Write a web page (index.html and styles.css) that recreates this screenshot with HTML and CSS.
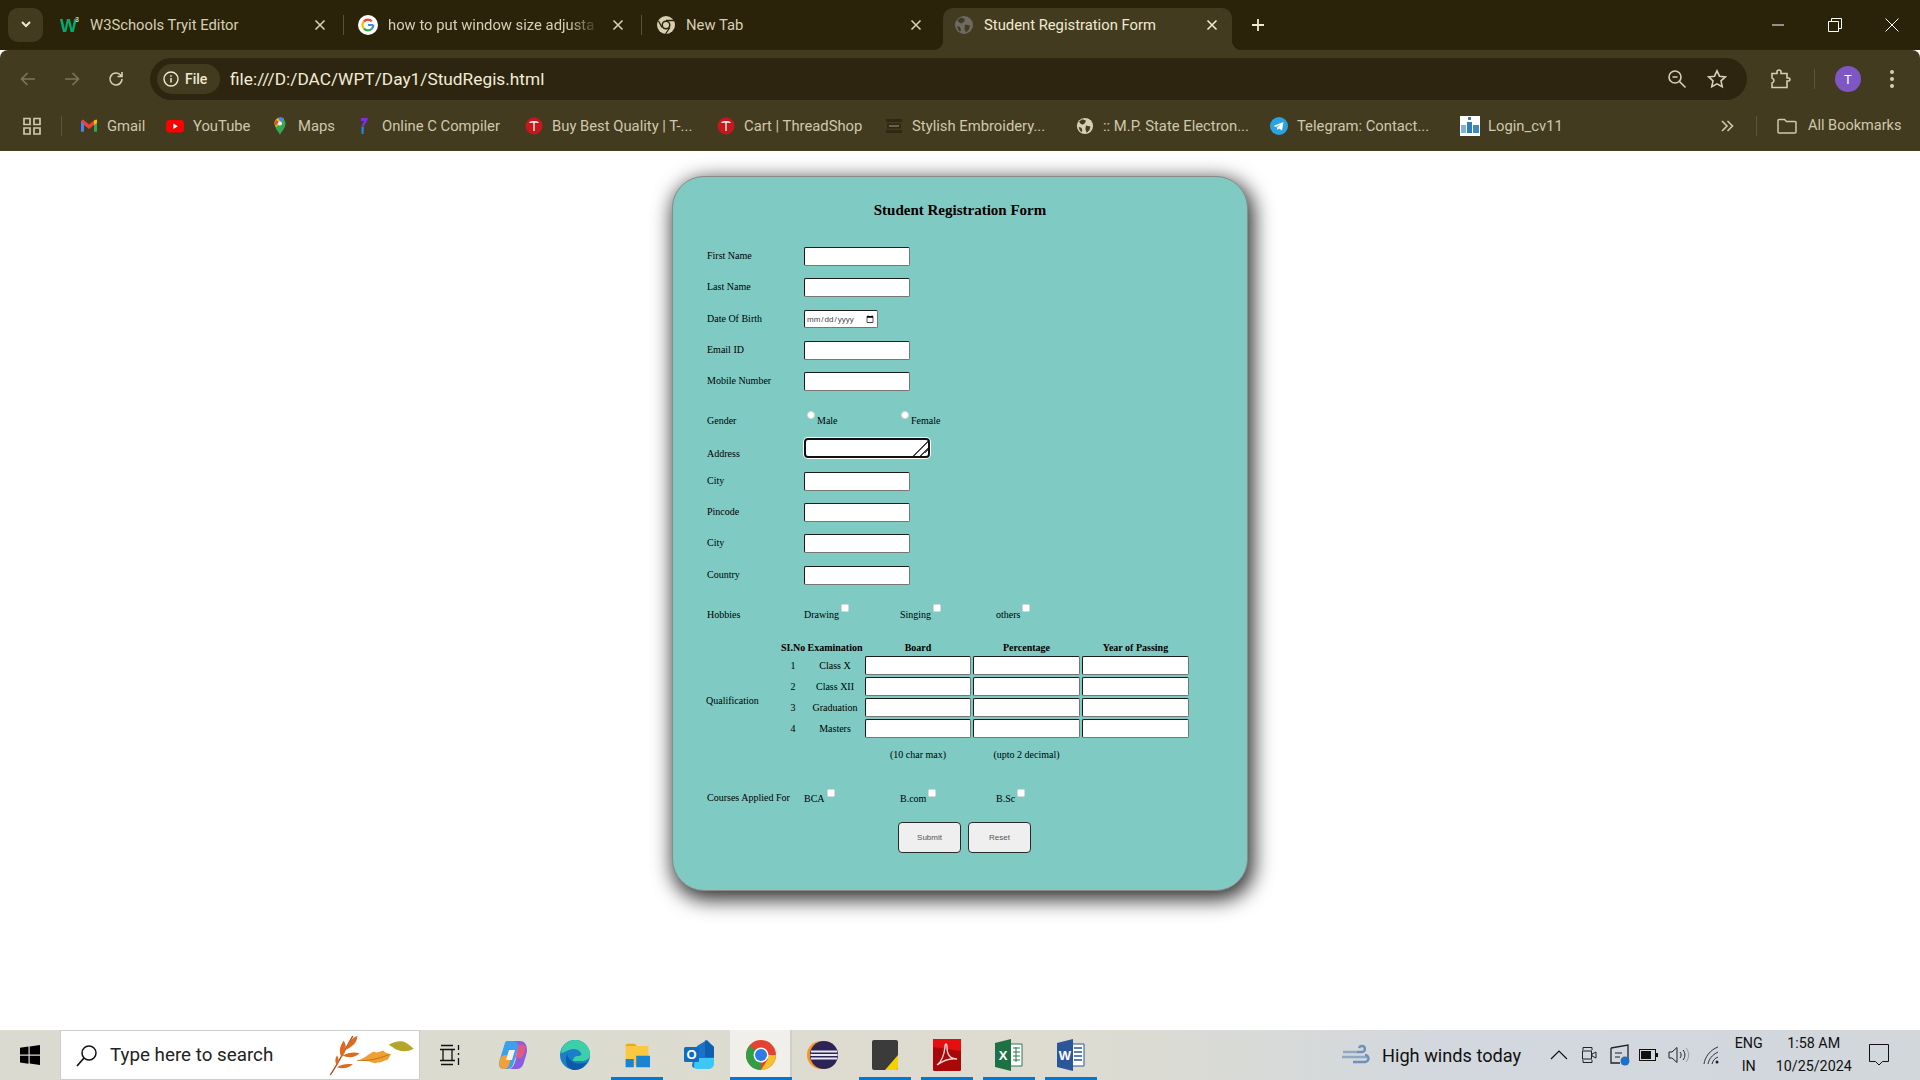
FILE: index.html
```html
<!DOCTYPE html>
<html>
<head>
    <title>Student Registration Form</title>
    <link rel="stylesheet" href="styles.css">
</head>
<body>

    <svg class="defs" width="0" height="0">
        <symbol id="close" viewBox="0 0 16 16"><path d="M3.5 3.5l9 9M12.5 3.5l-9 9" fill="none" stroke="currentColor" stroke-width="1.6"/></symbol>
        <symbol id="globe" viewBox="0 0 20 20"><circle cx="10" cy="10" r="9" fill="currentColor"/><path d="M7 2.5l4 1.5-1 3-3 1.500-2.500-1.500-1-2zM11 9.500l5 1-1 4-3 3-1.500-3.500zM3 11l3 1 1 3-1 2-2-2.500z" fill="#433b20"/></symbol>
        <symbol id="chrome-mono" viewBox="0 0 20 20"><circle cx="10" cy="10" r="9" fill="#d6cfb4"/><circle cx="10" cy="10" r="4.500" fill="#2a2209"/><circle cx="10" cy="10" r="3" fill="#d6cfb4"/><path d="M10 5.500h8M6 12.500L2.500 6M13.900 12.500L9.500 19" stroke="#2a2209" stroke-width="1.300"/></symbol>
        <symbol id="red-t" viewBox="0 0 18 18"><circle cx="9" cy="9" r="8.500" fill="#c8161d"/><path d="M4.500 5.500c3-1 6-1 9 0M9 5v9" stroke="#fff" stroke-width="1.300" fill="none"/></symbol>
        <symbol id="google" viewBox="0 0 20 20"><circle cx="10" cy="10" r="10" fill="#fff"/><path d="M15.300 10H10M15.300 10a5.400 5.400 0 0 1-1.500 3.800" fill="none" stroke="#4285f4" stroke-width="2.200"/><path d="M13.800 13.800a5.400 5.400 0 0 1-7.900-.3" fill="none" stroke="#34a853" stroke-width="2.200"/><path d="M5.900 13.500a5.400 5.400 0 0 1 0-7" fill="none" stroke="#fbbc05" stroke-width="2.200"/><path d="M5.900 6.500a5.400 5.400 0 0 1 7.900-.3" fill="none" stroke="#ea4335" stroke-width="2.200"/></symbol>
    </svg>

    <div class="tabstrip">
        <button class="tab-menu"><svg width="12" height="12" viewBox="0 0 12 12"><path d="M2 4l4 4 4-4" fill="none" stroke="#efe9d2" stroke-width="2"/></svg></button>

        <div class="tab">
            <svg class="fav" viewBox="0 0 20 20"><text x="0" y="17" class="w3-w">W</text><text x="15" y="7" class="w3-3">3</text></svg>
            <span class="tab-title">W3Schools Tryit Editor</span>
            <svg class="tab-close"><use href="#close"/></svg>
        </div>
        <div class="tab">
            <svg class="fav"><use href="#google"/></svg>
            <span class="tab-title tab-fade">how to put window size adjusta</span>
            <svg class="tab-close"><use href="#close"/></svg>
        </div>
        <div class="tab tab-last">
            <svg class="fav"><use href="#chrome-mono"/></svg>
            <span class="tab-title">New Tab</span>
            <svg class="tab-close"><use href="#close"/></svg>
        </div>
        <div class="tab tab-active">
            <svg class="fav fav-dim"><use href="#globe"/></svg>
            <span class="tab-title">Student Registration Form</span>
            <svg class="tab-close"><use href="#close"/></svg>
        </div>
        <svg class="new-tab" viewBox="0 0 16 16"><path d="M8 2v12M2 8h12" fill="none" stroke="currentColor" stroke-width="1.800"/></svg>

        <div class="win-controls">
            <div class="win-btn"><svg width="14" height="14" viewBox="0 0 14 14"><path d="M1 7h12" stroke="#fff" fill="none"/></svg></div>
            <div class="win-btn"><svg width="14" height="14" viewBox="0 0 14 14"><path d="M.5 3.500h10v10H.5zM3.500 3.500v-3h10v10h-3" stroke="#fff" fill="none"/></svg></div>
            <div class="win-btn"><svg width="14" height="14" viewBox="0 0 14 14"><path d="M.5.5l13 13M13.500.5l-13 13" stroke="#fff" fill="none"/></svg></div>
        </div>
    </div>

    <div class="toolbar">
        <div class="navrow">
            <div class="nav-btn nav-off"><svg width="18" height="18" viewBox="0 0 18 18"><path d="M16 9H3M8.500 3L2.500 9l6 6" fill="none" stroke="currentColor" stroke-width="1.600"/></svg></div>
            <div class="nav-btn nav-off"><svg width="18" height="18" viewBox="0 0 18 18"><path d="M2 9h13M9.500 3l6 6-6 6" fill="none" stroke="currentColor" stroke-width="1.600"/></svg></div>
            <div class="nav-btn"><svg width="18" height="18" viewBox="0 0 18 18"><path d="M15 9a6 6 0 1 1-1.800-4.300L15 6.500M15 2v4.500h-4.500" fill="none" stroke="currentColor" stroke-width="1.600"/></svg></div>

            <div class="omnibox">
                <div class="site-chip">
                    <svg width="16" height="16" viewBox="0 0 16 16"><circle cx="8" cy="8" r="7" fill="none" stroke="currentColor" stroke-width="1.400"/><path d="M8 7v4.500M8 4.200v1.500" stroke="currentColor" stroke-width="1.500"/></svg>
                    <span>File</span>
                </div>
                <span class="url">file:///D:/DAC/WPT/Day1/StudRegis.html</span>
                <div class="omni-icons">
                    <svg width="20" height="20" viewBox="0 0 20 20"><circle cx="8" cy="8" r="6" fill="none" stroke="currentColor" stroke-width="1.600"/><path d="M5.500 8h5M12.500 12.500l6 6" stroke="currentColor" stroke-width="1.600"/></svg>
                    <svg width="20" height="20" viewBox="0 0 20 20"><path d="M10 1.800l2.500 5.400 5.800.7-4.300 4 1.200 5.800-5.200-2.900-5.200 2.900 1.200-5.800-4.300-4 5.800-.7z" fill="none" stroke="currentColor" stroke-width="1.600"/></svg>
                </div>
            </div>

            <div class="profile-area">
                <svg width="20" height="20" viewBox="0 0 20 20"><path d="M1 4.500h5V3a2 2 0 0 1 4 0v1.500h6v4.500h1.500a1.500 1.500 0 0 1 0 3H16v6.500H1v-4.500a3 3 0 0 0 2-2.500 3 3 0 0 0-2-2.500z" fill="none" stroke="currentColor" stroke-width="1.600"/></svg>
                <div class="vsep vsep-profile"></div>
                <div class="avatar">T</div>
                <div class="dots"><i></i><i></i><i></i></div>
            </div>
        </div>

        <div class="bookmarks">
            <svg class="apps" width="20" height="20" viewBox="0 0 20 20"><path d="M2 2.500h6v6H2zM12 2.500h6v6h-6zM2 12h6v6H2zM12 12h6v6h-6z" fill="none" stroke="currentColor" stroke-width="1.700"/></svg>
            <div class="vsep vsep-apps"></div>
            <div class="bm-list">
                <div class="bm">
                    <svg class="bm-icon" viewBox="0 0 18 18"><path d="M1 4v10.500h3V8l5 4 5-4v6.500h3V4l-2-1.500L9 7.500 3 2.500z" fill="#ea4335"/><path d="M1 4v10.500h3V7z" fill="#4285f4"/><path d="M17 4v10.500h-3V7z" fill="#34a853"/><path d="M14 3.500l3-1V6l-3 2z" fill="#fbbc05"/></svg>
                    <span>Gmail</span>
                </div>
                <div class="bm">
                    <svg class="bm-icon" viewBox="0 1 18 16"><rect y="3" width="18" height="12.500" rx="3.500" fill="#f00"/><path d="M7.300 6.500l4.500 2.700-4.500 2.700z" fill="#fff"/></svg>
                    <span>YouTube</span>
                </div>
                <div class="bm">
                    <svg class="bm-icon" viewBox="2 0 14 18"><path d="M9 18C7.500 14 3.500 11.500 3.500 6.500a5.500 5.500 0 0 1 11 0C14.500 11.500 10.500 14 9 18z" fill="#34a853"/><path d="M5 2.500a5.500 5.500 0 0 1 8-.5L5.500 10a6 6 0 0 1-2-3.500A5.500 5.500 0 0 1 5 2.500z" fill="#fbbc05"/><path d="M7 1.300A5.500 5.500 0 0 1 13 2l-3 3.500z" fill="#4285f4"/><path d="M5 2.500L7.500 5 5 8.500 3.500 7z" fill="#ea4335"/><circle cx="9" cy="6.500" r="2" fill="#fff"/></svg>
                    <span>Maps</span>
                </div>
                <div class="bm">
                    <svg class="bm-icon" viewBox="0 0 18 18"><path d="M6 1h7l-1 3-3 5-3 .5 3-5.500H6z" fill="#7b2fe0"/><path d="M6.500 10L9 9.500 8.500 17H6.500z" fill="#1e88e5"/></svg>
                    <span>Online C Compiler</span>
                </div>
                <div class="bm"><svg class="bm-icon"><use href="#red-t"/></svg><span>Buy Best Quality | T-...</span></div>
                <div class="bm"><svg class="bm-icon"><use href="#red-t"/></svg><span>Cart | ThreadShop</span></div>
                <div class="bm">
                    <svg class="bm-icon" viewBox="0 0 18 18"><path d="M1 2h16v3H1zM2 6.500h14v5H2zM1 13h16v3H1z" fill="#2e2815"/><path d="M4 8h10v2H4z" fill="#6b6347"/></svg>
                    <span>Stylish Embroidery...</span>
                </div>
                <div class="bm"><svg class="bm-icon bm-globe"><use href="#globe"/></svg><span>:: M.P. State Electron...</span></div>
                <div class="bm">
                    <svg class="bm-icon" viewBox="0 0 18 18"><circle cx="9" cy="9" r="9" fill="#2aa3df"/><path d="M3.500 9l10-4-1.500 8.500-3-2-1.500 1.500-.5-2.500 4-3.500-5 3z" fill="#fff"/></svg>
                    <span>Telegram: Contact...</span>
                </div>
                <div class="bm bm-last">
                    <svg class="bm-icon bm-login" viewBox="0 0 20 20"><rect width="20" height="20" fill="#fff"/><rect x="1" y="9" width="5" height="8" fill="#7fb2d6"/><rect x="7" y="6" width="5" height="11" fill="#2f7fb5"/><rect x="13" y="9" width="6" height="8" fill="#3c8cc0"/><rect x="8" y="1" width="3" height="3" fill="#2f7fb5"/></svg>
                    <span>Login_cv11</span>
                </div>
            </div>
            <svg class="bm-more" width="16" height="16" viewBox="0 0 16 16"><path d="M3 3l5 5-5 5M8.500 3l5 5-5 5" fill="none" stroke="currentColor" stroke-width="1.600"/></svg>
            <div class="vsep vsep-more"></div>
            <svg class="bm-folder" width="20" height="18" viewBox="0 0 20 18"><path d="M1 3.500a1 1 0 0 1 1-1h5.500l2 2H18a1 1 0 0 1 1 1V15a1 1 0 0 1-1 1H2a1 1 0 0 1-1-1z" fill="none" stroke="currentColor" stroke-width="1.500"/></svg>
            <span class="bm-all">All Bookmarks</span>
        </div>
    </div>

    <div class="page">
        <form class="card">
            <h1>Student Registration Form</h1>

            <div class="row"><label>First Name</label><input type="text"></div>
            <div class="row"><label>Last Name</label><input type="text"></div>
            <div class="row"><label>Date Of Birth</label><input type="date" class="dob"></div>
            <div class="row"><label>Email ID</label><input type="text"></div>
            <div class="row"><label>Mobile Number</label><input type="text"></div>

            <div class="row row-gender">
                <label>Gender</label>
                <div class="opt opt-gender"><input type="radio" name="gender" class="radio"><span>Male</span></div>
                <div class="opt opt-gender"><input type="radio" name="gender" class="radio"><span>Female</span></div>
            </div>

            <div class="row row-address">
                <label>Address</label>
                <textarea></textarea>
            </div>

            <div class="row"><label>City</label><input type="text"></div>
            <div class="row"><label>Pincode</label><input type="text"></div>
            <div class="row"><label>City</label><input type="text"></div>
            <div class="row"><label>Country</label><input type="text"></div>

            <div class="row row-hobbies">
                <label>Hobbies</label>
                <div class="opt"><span>Drawing</span><input type="checkbox" class="check"></div>
                <div class="opt"><span>Singing</span><input type="checkbox" class="check"></div>
                <div class="opt"><span>others</span><input type="checkbox" class="check"></div>
            </div>

            <div class="qualification">
                <label class="qual-label">Qualification</label>
                <table>
                    <colgroup>
                        <col class="col-no"><col class="col-exam"><col class="col-board"><col class="col-wide"><col class="col-wide">
                    </colgroup>
                    <tr><th>SI.No</th><th>Examination</th><th>Board</th><th>Percentage</th><th>Year of Passing</th></tr>
                    <tr><td>1</td><td>Class X</td><td><input type="text"></td><td><input type="text"></td><td><input type="text"></td></tr>
                    <tr><td>2</td><td>Class XII</td><td><input type="text"></td><td><input type="text"></td><td><input type="text"></td></tr>
                    <tr><td>3</td><td>Graduation</td><td><input type="text"></td><td><input type="text"></td><td><input type="text"></td></tr>
                    <tr><td>4</td><td>Masters</td><td><input type="text"></td><td><input type="text"></td><td><input type="text"></td></tr>
                    <tr class="notes"><td></td><td></td><td>(10 char max)</td><td>(upto 2 decimal)</td><td></td></tr>
                </table>
            </div>

            <div class="row row-courses">
                <label>Courses Applied For</label>
                <div class="opt"><span>BCA</span><input type="checkbox" class="check"></div>
                <div class="opt"><span>B.com</span><input type="checkbox" class="check"></div>
                <div class="opt"><span>B.Sc</span><input type="checkbox" class="check"></div>
            </div>

            <div class="buttons">
                <button type="button">Submit</button>
                <button type="button">Reset</button>
            </div>
        </form>
    </div>

    <div class="taskbar">
        <div class="start">
            <svg width="22" height="22" viewBox="0 0 22 22"><path d="M1 3.800l8.500-1.200v8H1zM10.700 2.400L21 1v9.600H10.700zM1 11.800h8.500v8L1 18.600zM10.700 11.800H21V21l-10.300-1.400z" fill="#000"/></svg>
        </div>
        <div class="search">
            <svg width="24" height="24" viewBox="0 0 24 24"><circle cx="14" cy="10" r="7" fill="none" stroke="#111" stroke-width="1.500"/><path d="M9 15l-7 8" stroke="#111" stroke-width="1.600"/></svg>
            <span class="search-text">Type here to search</span>
            <svg class="leaves" width="88" height="42" viewBox="0 4 78 43" preserveAspectRatio="none">
                <path d="M2 46C8 36 14 22 22 6" fill="none" stroke="#a8461b" stroke-width="1.200"/>
                <path d="M12 28c-3-6-1-13 2-17 3 5 2 12-2 17zM16 20c1-7 5-12 10-14 0 6-4 11-10 14zM13 26c5-3 11-4 15-2-4 4-10 5-15 2zM8 36c-2-3-2-7 0-10 2 3 2 7 0 10zM8 38c4-3 9-4 14-3-4 4-9 5-14 3z" fill="#dc6a1f"/>
                <path d="M28 30c5-1 8-6 13-8 2 2 5 0 8-1 2 3 5 3 7 4-2 2-2 5-4 6-3 0-4 3-8 2-3 2-5 0-8-1-3 0-6-1-8-2z" fill="#f0a033"/>
                <path d="M26 31c10 1 20-2 28-6" fill="none" stroke="#b56a14" stroke-width=".8"/>
                <path d="M54 13c5-3 10-5 15-2 3 2 5 4 7 6-6 4-14 3-18-1-1-1-3-2-4-3z" fill="#b3a62a" transform="translate(0 2)"/>
            </svg>
        </div>

        <div class="task task-plain">
            <svg width="24" height="24" viewBox="0 0 24 24"><path d="M2 2.500h12M2 21.500h12M4 6.500h9v11H4zM1 6.500h15M1 17.500h15M19.500 2v5M19.500 10v2M19.500 15v7" fill="none" stroke="#111" stroke-width="1.300"/></svg>
        </div>
        <div class="task task-plain">
            <svg width="30" height="32" viewBox="0 0 30 32"><path d="M9 2h7c3 0 4 2 5 5l-5 16c-1 4-3 7-7 7H6C1 30 0 26 2 20L6 7c1-3 1-5 3-5z" fill="#3aa0ef"/><path d="M15 2h7c4 0 7 3 7 9 0 4-2 8-3 12-1 4-3 7-7 7h-7c3-2 4-4 5-7l4-13c0-4-2-8-6-8z" fill="#8a5ee0"/><path d="M3 18c3-3 8-2 10 1l-2 7c-1 3-3 4-5 4-5 0-6-6-3-12z" fill="#f0a13a"/><path d="M21 6c-2 2-1 6-3 11l-1 2 6 0c3-3 5-9 4-12-1-1-4-3-6-1z" fill="#e8577f"/><path d="M11 11h6l-3 10H8z" fill="#f5f2ee"/></svg>
        </div>
        <div class="task task-plain">
            <svg width="32" height="32" viewBox="0 0 32 32"><circle cx="16" cy="16" r="15" fill="#1a7fc9"/><path d="M2 14C3 5 10 1 16 1c8 0 15 6 15 14 0 5-4 7-8 7h-9c0-4 3-5 5-5 3 0 4-1 3-3-2-4-8-5-12-3-4 1-6 3-8 3z" fill="#3dd0a8"/><path d="M8 15c2 8 10 12 20 8-3 5-7 8-12 8C9 31 5 24 8 15z" fill="#0c5aa8"/></svg>
        </div>
        <div class="task task-on">
            <svg width="26" height="28" viewBox="0 0 32 30"><path d="M2 3a2 2 0 0 1 2-2h9l3 3h-14z" fill="#e8a91c"/><path d="M2 4h28v22a2 2 0 0 1-2 2H4a2 2 0 0 1-2-2z" fill="#fbc83f"/><path d="M15 16h17v14H15zM2 20h10v10H2z" fill="#1a84d4"/></svg>
        </div>
        <div class="task task-plain">
            <svg width="32" height="32" viewBox="0 0 32 32"><path d="M14 7l10-6 7 7v14l-7 7H12a3 3 0 0 1-3-3z" fill="#1a73c9"/><path d="M12 19h19v6c0 3-3 5-6 5H14a3 3 0 0 1-3-3z" fill="#3cc8f4"/><path d="M22 1l9 7v10h-9z" fill="#0f5fb0"/><rect x="1" y="8" width="15" height="15" rx="1.500" fill="#0f6cc2"/><text x="8.500" y="20" class="tb-letter">O</text></svg>
        </div>
        <div class="task task-active">
            <svg width="32" height="32" viewBox="0 0 32 32"><circle cx="16" cy="16" r="15" fill="#e4432f"/><path d="M16 16L3 23.500A15 15 0 0 0 16 31z" fill="#2f9e44"/><path d="M3 23.500A15 15 0 0 1 4.500 6.500L16 16z" fill="#2f9e44"/><path d="M16 16h14.900A15 15 0 0 1 16 31L23 20z" fill="#f7c12b"/><circle cx="16" cy="16" r="7.500" fill="#fff"/><circle cx="16" cy="16" r="6" fill="#2f7ce8"/></svg>
        </div>
        <div class="task task-sep">
            <svg width="32" height="32" viewBox="0 0 32 32"><circle cx="14" cy="16" r="14" fill="#f0962a"/><circle cx="17" cy="16" r="14" fill="#2c2454"/><path d="M4 12.500h26M3.500 16h27M4 19.500h26" stroke="#e9e7f2" stroke-width="2"/></svg>
        </div>
        <div class="task task-on">
            <svg width="26" height="30" viewBox="0 0 26 30"><rect width="26" height="30" rx="2" fill="#3b3b3b"/><path d="M26 15v13a2 2 0 0 1-2 2H13z" fill="#f7d000"/></svg>
        </div>
        <div class="task task-on">
            <svg width="28" height="32" viewBox="0 0 28 32"><rect width="28" height="32" rx="1.500" fill="#a80808"/><path d="M0 0h28v12L0 8z" fill="#e60f0f"/><path d="M4 26c4-3 7-9 8-18 0-4 2-4 2 0 0 8 4 12 10 12-6-1-13 1-20 6z" fill="none" stroke="#f3d6d6" stroke-width="1.400"/></svg>
        </div>
        <div class="task task-on">
            <svg width="28" height="32" viewBox="0 0 28 32"><path d="M14 5h13v22H14z" fill="#fff" stroke="#2b7a4b"/><path d="M18 9h7M18 13h7M18 17h7M18 21h7M21 8v15" stroke="#2b7a4b"/><path d="M0 4l16-4v32L0 28z" fill="#1e7145"/><text x="8" y="21" class="tb-letter">X</text></svg>
        </div>
        <div class="task task-on">
            <svg width="28" height="32" viewBox="0 0 28 32"><path d="M14 5h13v22H14z" fill="#fff" stroke="#2b579a"/><path d="M17 9h8M17 13h8M17 17h8M17 21h8" stroke="#2b579a" stroke-width="1.500"/><path d="M0 4l16-4v32L0 28z" fill="#2b579a"/><text x="8" y="21" class="tb-letter">W</text></svg>
        </div>

        <div class="tray">
            <svg class="tray-wind" width="30" height="22" viewBox="0 0 30 22"><path d="M1 8h14M0 13h27" stroke="#8fa8c4" stroke-width="2.500" fill="none"/><path d="M11 18h12a3.500 3.500 0 0 0 0-7" stroke="#6f90b8" stroke-width="2.500" fill="none"/><path d="M15 8h5a3 3 0 1 0-3-4" stroke="#6f90b8" stroke-width="2.500" fill="none"/></svg>
            <span class="weather">High winds today</span>
            <svg class="tray-chevron" width="18" height="10" viewBox="0 0 18 10"><path d="M1 9l8-8 8 8" fill="none" stroke="#111" stroke-width="1.200"/></svg>
            <svg class="tray-ico tray-meet" width="18" height="20" viewBox="0 0 18 20"><path d="M2 5V2.500h9V5M2 15v2.500h9V15" fill="none" stroke="#222"/><rect x="1.500" y="6" width="9" height="8" fill="none" stroke="#222"/><path d="M11 9l4-2v6l-4-2z" fill="none" stroke="#222"/></svg>
            <svg class="tray-ico tray-sync" width="22" height="22" viewBox="0 0 22 22"><path d="M2 4l17-3v14M2 4v15h9" fill="none" stroke="#222" stroke-width="1.300"/><path d="M6 9h7M6 13h5" stroke="#222"/><circle cx="16" cy="17" r="4.500" fill="#1f6fc4"/></svg>
            <svg class="tray-ico tray-batt" width="20" height="12" viewBox="0 0 20 12"><rect x=".5" y=".5" width="16" height="11" fill="none" stroke="#111"/><rect x="2" y="2" width="10" height="8" fill="#111"/><rect x="17" y="4" width="2" height="4" fill="#111"/></svg>
            <svg class="tray-ico tray-vol" width="22" height="18" viewBox="0 0 22 18"><path d="M1 6h3l5-4.500v15L4 12H1z" fill="none" stroke="#222"/><path d="M12 6c1.500 2 1.500 4 0 6M15 4c2.500 3 2.500 7 0 10" fill="none" stroke="#222"/><path d="M18 2c3.500 4 3.500 10 0 14" fill="none" stroke="#999"/></svg>
            <svg class="tray-ico tray-wifi" width="22" height="20" viewBox="0 0 22 20"><path d="M2 19C3 12 8 5 16 2M6 19c1-5 4-9 10-12M10 19c.5-3 3-6 6-7" fill="none" stroke="#333"/><circle cx="15" cy="17" r="1.500" fill="#222"/></svg>
            <div class="lang"><span>ENG</span><span>IN</span></div>
            <div class="clock"><span>1:58 AM</span><span>10/25/2024</span></div>
            <svg class="tray-note" width="20" height="22" viewBox="0 0 20 22"><path d="M.5.500h19v17h-6l-3.500 3.500-3.500-3.500h-6z" fill="none" stroke="#111"/></svg>
        </div>
    </div>

</body>
</html>
```

FILE: styles.css
```css
* {
    box-sizing: border-box;
}
html, body {
    margin: 0;
    height: 100%;
}
body {
    width: 1920px;
    height: 1080px;
    overflow: hidden;
    display: flex;
    flex-direction: column;
    background-color: #ffffff;
    font-family: Roboto, 'Liberation Sans', sans-serif;
}
.defs {
    display: block;
    height: 0;
}

/* tab strip */
.tabstrip {
    height: 50px;
    position: relative;
    z-index: 0;
    display: flex;
    align-items: flex-start;
    padding-left: 8px;
    background-color: #2a2209;
    color: #d6cfb4;
}
.tab-menu {
    width: 35px;
    height: 34px;
    margin: 8px 3px 0 0;
    padding: 0;
    border: none;
    border-radius: 10px;
    background-color: #433b20;
}
.tab {
    width: 298px;
    height: 42px;
    margin-top: 8px;
    padding: 0 16px 8px 14px;
    display: flex;
    align-items: center;
    gap: 10px;
    position: relative;
    font-size: 14.8px;
    color: #d6cfb4;
}
.tab::after {
    content: "";
    position: absolute;
    right: 0;
    top: 7px;
    width: 1px;
    height: 20px;
    background-color: #59512f;
}
.tab-last::after {
    display: none;
}
.fav {
    width: 20px;
    height: 20px;
    flex: none;
}
.fav-dim {
    color: #6d6a63;
}
.tab-title {
    flex: 1;
    overflow: hidden;
    white-space: nowrap;
}
.tab-fade {
    -webkit-mask-image: linear-gradient(to right, #000 85%, transparent 100%);
    mask-image: linear-gradient(to right, #000 85%, transparent 100%);
}
.tab-close {
    width: 16px;
    height: 16px;
    flex: none;
}
.tab-active {
    width: 289px;
    margin-left: 3px;
    margin-right: 18px;
    padding: 0 12px 8px 11px;
    border-radius: 10px 10px 0 0;
    background-color: #433b20;
    color: #efe9d2;
}
.tab-active::after {
    display: none;
}
.tab-active::before {
    content: "";
    position: absolute;
    left: -10px;
    right: -10px;
    bottom: 0;
    height: 10px;
    z-index: -1;
    background:
        radial-gradient(circle at 0 0, #2a2209 10px, #433b20 10.5px) left / 10px 10px no-repeat,
        radial-gradient(circle at 100% 0, #2a2209 10px, #433b20 10.5px) right / 10px 10px no-repeat;
}
.new-tab {
    width: 16px;
    height: 16px;
    margin-top: 17px;
    flex: none;
    color: #efe9d2;
}
.w3-w {
    font: bold 18px 'Liberation Sans', sans-serif;
    fill: #04aa6d;
}
.w3-3 {
    font: bold 7px 'Liberation Sans', sans-serif;
    fill: #d6cfb4;
}
.win-controls {
    margin-left: auto;
    display: flex;
}
.win-btn {
    width: 57px;
    height: 50px;
    display: flex;
    align-items: center;
    justify-content: center;
}

/* toolbar */
.toolbar {
    height: 101px;
    background-color: #433b20;
    color: #d6cfb4;
    border-radius: 8px 8px 0 0;
}
.navrow {
    height: 58px;
    padding: 8px 0 8px 10px;
    display: flex;
    align-items: center;
    gap: 8px;
}
.nav-btn {
    width: 36px;
    height: 36px;
    display: flex;
    align-items: center;
    justify-content: center;
}
.nav-off {
    color: #7d7659;
}
.omnibox {
    width: 1597px;
    height: 42px;
    margin-left: 8px;
    padding: 0 20px 0 7px;
    display: flex;
    align-items: center;
    border-radius: 21px;
    background-color: #2e2510;
}
.site-chip {
    height: 30px;
    width: 63px;
    padding-left: 6px;
    display: flex;
    align-items: center;
    gap: 6px;
    border-radius: 15px;
    background-color: #433b20;
    font-size: 14px;
    font-weight: 500;
    color: #efe9d2;
}
.url {
    margin-left: 10px;
    font-size: 17.3px;
    color: #f2ecd6;
}
.omni-icons {
    margin-left: auto;
    display: flex;
    gap: 20px;
}
.profile-area {
    display: flex;
    align-items: center;
    margin-left: 16px;
}
.vsep {
    width: 1px;
    height: 20px;
    background-color: #5d5536;
}
.vsep-profile {
    margin-left: 23px;
}
.avatar {
    width: 26px;
    height: 26px;
    margin-left: 20px;
    display: flex;
    align-items: center;
    justify-content: center;
    border-radius: 50%;
    background-color: #7e57c2;
    font-size: 13px;
    color: #ffffff;
}
.dots {
    margin-left: 29px;
    display: flex;
    flex-direction: column;
    gap: 3px;
}
.dots i {
    width: 4px;
    height: 4px;
    border-radius: 50%;
    background-color: #d6cfb4;
}

/* bookmarks bar */
.bookmarks {
    height: 43px;
    padding: 0 0 8px 22px;
    display: flex;
    align-items: center;
    font-size: 14.8px;
    color: #cfc8ae;
}
.apps {
    flex: none;
}
.vsep-apps {
    margin-left: 19px;
}
.bm-list {
    margin-left: 18px;
    display: grid;
    grid-template-columns: 86px 105px 84px 170px 192px 168px 191px 194px 190px 259px;
}
.bm {
    display: flex;
    align-items: center;
    gap: 9px;
    white-space: nowrap;
}
.bm-last {
    gap: 8px;
}
.bm-icon {
    width: 18px;
    height: 18px;
    flex: none;
}
.bm-globe {
    color: #d6cfb4;
}
.bm-login {
    width: 20px;
    height: 20px;
}
.bm-more {
    flex: none;
}
.vsep-more {
    margin-left: 21px;
}
.bm-folder {
    margin-left: 20px;
    flex: none;
}
.bm-all {
    margin-left: 11px;
    font-size: 14.5px;
    white-space: nowrap;
}

/* form */
.page {
    flex: 1;
    padding-top: 25px;
    display: flex;
    justify-content: center;
    align-items: flex-start;
}
.card {
    width: 576px;
    height: 715px;
    padding: 0 34px;
    border: 1px solid #8a8a8a;
    border-radius: 32px;
    background-color: #7fcac3;
    box-shadow: 3px 6px 20px 3px rgba(0, 0, 0, 0.8);
    font-family: 'Liberation Serif', 'Times New Roman', serif;
    font-size: 10px;
    color: #000000;
}
h1 {
    height: 64px;
    margin: 0;
    padding-top: 24px;
    font-size: 15px;
    line-height: 18px;
    font-weight: bold;
    text-align: center;
}
.row {
    height: 31.25px;
    display: flex;
    align-items: center;
}
.row label {
    width: 97px;
    flex: none;
    margin-bottom: 2px;
}
input[type="text"] {
    width: 106px;
    height: 19px;
    padding: 0 2px;
    border: 1px solid;
    border-color: #1c1c1c #767676 #767676 #1c1c1c;
    border-radius: 2px;
    background-color: #ffffff;
}
.dob {
    width: 74px;
    height: 18px;
    padding: 0 1px;
    border: 1px solid;
    border-color: #1c1c1c #767676 #767676 #1c1c1c;
    border-radius: 2px;
    background-color: #ffffff;
    font: 8px 'Liberation Sans', sans-serif;
    color: #444;
}
.row-gender {
    height: 39px;
    padding-top: 7px;
}
.row-gender label {
    margin-bottom: 0;
}
.row-address {
    height: 29.5px;
}
.row-address label {
    margin: 4.5px 0 0;
}
textarea {
    width: 126px;
    height: 20px;
    margin-bottom: 5.5px;
    padding: 0 2px;
    border: 2px solid #111111;
    border-radius: 4px;
    outline: none;
    background-color: #ffffff;
    box-shadow: 0 0 0 1px #ffffff;
}
textarea::-webkit-resizer {
    background: linear-gradient(135deg, transparent 48%, #444 48%, #444 56%, transparent 56%, transparent 72%, #444 72%, #444 80%, transparent 80%);
}
.row-hobbies {
    height: 47px;
}
.row-hobbies label {
    margin-bottom: 0;
}
.opt {
    width: 96px;
    display: flex;
    align-items: center;
}
.opt-gender {
    width: 94px;
}
.radio, .check {
    appearance: none;
    -webkit-appearance: none;
    width: 8px;
    height: 8px;
    flex: none;
    margin: 0 0 10px 2px;
    border: 1px solid #d8d8d8;
    background-color: #ffffff;
}
.radio {
    margin: 0 2px 10px 3px;
    border-radius: 50%;
}
.check {
    border-radius: 1.5px;
}
.row-hobbies .check {
    margin-bottom: 13px;
}
.qualification {
    height: 135px;
    margin-left: -1px;
    padding-top: 2px;
    display: flex;
    align-items: center;
}
.qual-label {
    width: 73px;
    flex: none;
    margin-bottom: 11px;
}
table {
    table-layout: fixed;
    width: 410px;
    border-collapse: separate;
    border-spacing: 2px;
    align-self: flex-start;
}
.col-no {
    width: 24px;
}
.col-exam {
    width: 56px;
}
.col-board {
    width: 106px;
}
.col-wide {
    width: 107px;
}
th, td {
    padding: 0;
    text-align: center;
    white-space: nowrap;
}
th {
    height: 12px;
    line-height: 12px;
    font-weight: bold;
}
td {
    height: 19px;
}
td input[type="text"] {
    display: block;
    width: 100%;
}
.notes td {
    height: 29px;
}
.row-courses {
    height: 49.5px;
    padding-top: 2px;
}
.row-courses .check {
    margin-bottom: 12px;
}
.buttons {
    padding-left: 191px;
    display: flex;
    gap: 7px;
}
button {
    cursor: pointer;
}
.buttons button {
    width: 63px;
    height: 31px;
    padding: 0;
    border: 1px solid #2a2a2a;
    border-radius: 4px;
    background-color: #efefef;
    font: 8px 'Liberation Sans', sans-serif;
    color: #555;
}

/* taskbar */
.taskbar {
    height: 50px;
    display: flex;
    align-items: stretch;
    background: linear-gradient(to right, #dadad0 0%, #dedcd0 55%, #d2d8de 75%, #d2d7dc 100%);
}
.start {
    width: 60px;
    flex: none;
    display: flex;
    align-items: center;
    justify-content: center;
}
.search {
    width: 360px;
    flex: none;
    padding-left: 14px;
    display: flex;
    align-items: center;
    border: 1px solid #cdcdcd;
    background-color: #ffffff;
    font-size: 18.8px;
    color: #222;
}
.search-text {
    margin-left: 11px;
    white-space: nowrap;
}
.leaves {
    margin-left: auto;
    margin-right: 3px;
    flex: none;
}
.task {
    width: 62px;
    flex: none;
    display: flex;
    align-items: center;
    justify-content: center;
    position: relative;
}
.task-on::after, .task-active::after {
    content: "";
    position: absolute;
    left: 5px;
    right: 5px;
    bottom: 0;
    height: 3px;
    background-color: #0078d4;
}
.task-active {
    padding-left: 2px;
    background-color: #f0efe9;
    border-right: 2px solid #d0d0c8;
}
.task-active::after {
    left: 0;
    right: -2px;
}
.tray {
    flex: 1;
    min-width: 0;
    display: flex;
    align-items: center;
    position: relative;
}
.tray-wind {
    margin-left: 240px;
    flex: none;
}
.weather {
    margin-left: 10px;
    font-size: 18.2px;
    color: #111;
    white-space: nowrap;
}
.tray-chevron {
    margin-left: 28.5px;
    flex: none;
}
.tray-ico {
    flex: none;
}
.tray-meet {
    margin-left: 13px;
}
.tray-sync {
    margin-left: 10px;
}
.tray-batt {
    margin-left: 8.5px;
}
.tray-vol {
    margin-left: 8.5px;
}
.tray-wifi {
    margin-left: 12px;
}
.lang, .clock {
    display: flex;
    flex-direction: column;
    align-items: center;
    gap: 4px;
    font-size: 14.3px;
    line-height: 19px;
    color: #111;
    white-space: nowrap;
}
.lang {
    width: 36px;
    margin-left: 7px;
}
.clock {
    width: 76px;
    margin-left: 9px;
}
.tray-note {
    margin-left: 17px;
    flex: none;
}
.tb-letter {
    font: bold 13px 'Liberation Sans', sans-serif;
    fill: #ffffff;
    text-anchor: middle;
}
```
